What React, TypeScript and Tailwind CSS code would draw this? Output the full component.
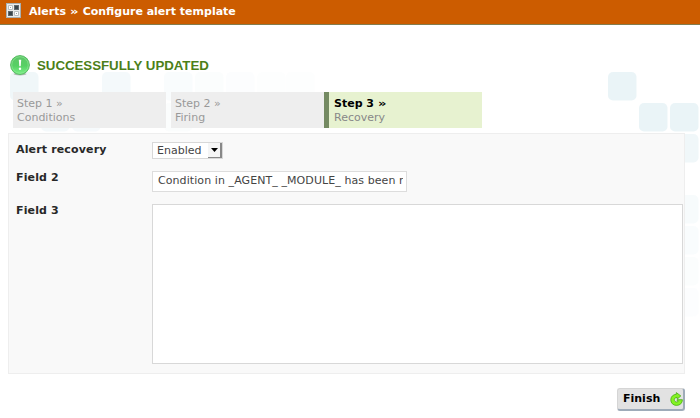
const tiles = [
  { x: 10, y: 72, o: 0.7 }, { x: 102, y: 72, o: 0.5 }, { x: 164, y: 72, o: 0.25 },
  { x: 195, y: 72, o: 0.2 }, { x: 226, y: 72, o: 0.15 }, { x: 257, y: 72, o: 0.1 }, { x: 286, y: 72, o: 0.07 },
  { x: 41, y: 103, o: 0.5 }, { x: 72, y: 103, o: 0.4 }, { x: 164, y: 103, o: 0.2 },
  { x: 608, y: 72, o: 0.95 }, { x: 639, y: 103, o: 0.95 }, { x: 670, y: 103, o: 0.95 },
  { x: 670, y: 134, o: 0.7 }, { x: 670, y: 195, o: 0.35 }, { x: 670, y: 226, o: 0.25 },
  { x: 670, y: 257, o: 0.2 }, { x: 670, y: 288, o: 0.15 },
];

function Backdrop() {
  return (
    <svg className="absolute inset-0 -z-10" width="700" height="418" aria-hidden="true">
      {tiles.map((t, i) => (
        <rect key={i} x={t.x} y={t.y} width="28.500" height="28.500" rx="5" fill="#e9f3f7" opacity={t.o} />
      ))}
    </svg>
  );
}

function TemplateIcon() {
  return (
    <svg width="15" height="15" viewBox="0 0 15 15" className="shrink-0">
      <rect x=".5" y=".5" width="14" height="14" fill="#e9ebeb" stroke="#a9b1b3" />
      <path d="M2.500 2.500h4v4h-4zM8.500 8.500h4v4h-4z" fill="#fff" stroke="#b9bebf" />
      <path d="M8 2h5v5H8zM2 8h5v5H2z" fill="#5f686c" />
      <path d="M9 3h3v3H9zM3 9h3v3H3z" fill="#39444a" />
      <path d="M4 4h1v1H4zM10 10h1v1h-1z" fill="#9aa1a4" />
    </svg>
  );
}

function SuccessIcon() {
  return (
    <svg width="20" height="21" viewBox="0 0 20 21" className="shrink-0">
      <defs>
        <linearGradient id="ok" x1="0" y1="0" x2="0" y2="1">
          <stop offset="0" stopColor="#5fc569" />
          <stop offset=".55" stopColor="#56d064" />
          <stop offset="1" stopColor="#7cf388" />
        </linearGradient>
      </defs>
      <ellipse cx="10" cy="19" rx="6.500" ry="1.500" fill="#8a948b" opacity=".6" />
      <circle cx="10" cy="10" r="9.400" fill="url(#ok)" stroke="#4bb557" strokeWidth=".9" />
      <circle cx="10" cy="10" r="8.300" fill="none" stroke="#8ee696" strokeWidth=".7" />
      <path d="M8.800 4.700h2.400l-.5 6.600H9.300z" fill="#fff" />
      <circle cx="10" cy="13.800" r="1.200" fill="#fff" />
    </svg>
  );
}

function FinishIcon() {
  return (
    <svg width="13" height="14" viewBox="0 0 13 14" className="shrink-0">
      <path
        d="M6.300 2.300V.6l4.500 3.300-3.600 3.300V5.400C5.500 5.300 4.300 6.300 4.300 7.700c0 1.300 1 2.300 2.300 2.300.9 0 1.500-.4 1.900-1.200H7.200V7.700h5.200c0 3.300-2.300 5.700-5.800 5.700C3.200 13.400.8 11 .8 7.900.8 4.800 3 2.400 6.300 2.300z"
        fill="#83f322" stroke="#4aac16" strokeWidth=".8" strokeLinejoin="round"
      />
    </svg>
  );
}

/* Bold headings use a slightly widened guillemet. */
function Arrows() {
  return <span className="inline-block w-[9px] origin-left scale-x-[1.200]">»</span>;
}

function Step({ title, name, active = false, className = "" }: { title: string; name: string; active?: boolean; className?: string }) {
  return (
    <li className={`h-9 pl-[5px] pt-[5px] ${active ? "w-[158px] border-l-[5px] border-[#748a62] bg-[#e7f2d0]" : "w-[153px] bg-[#eee]"} ${className}`}>
      <div className={`h-[14px] leading-[13px] ${active ? "font-bold text-black" : "-ml-px text-[#999]"}`}>
        {title} {active ? <Arrows /> : "»"}
      </div>
      <div className={`leading-[13px] ${active ? "text-[#888]" : "-ml-px text-[#999]"}`}>{name}</div>
    </li>
  );
}

const label = "w-[136px] shrink-0 font-bold leading-[14px] tracking-[0.150px] text-[#282828]";

export default function App() {
  return (
    <div className="relative isolate h-[418px] w-[700px] overflow-hidden bg-white font-['DejaVu_Sans',sans-serif] text-[11px]">
      <Backdrop />
      <header className="flex h-[25px] items-start border-b border-[#847c4c] bg-[#cc5c00] pl-1.5 pt-[3px]">
        <TemplateIcon />
        <h1 className="ml-2 mt-[2px] whitespace-nowrap font-bold leading-[14px] text-white">
          Alerts <Arrows /> Configure alert template
        </h1>
      </header>
      <div className="mt-[30px] flex h-[21px] pl-2.5">
        <SuccessIcon />
        <h2 className="ml-[7px] mt-[3px] whitespace-nowrap font-['Liberation_Sans',sans-serif] text-[13.300px] font-bold leading-4 tracking-[-0.040px] text-[#4c7f19]">SUCCESSFULLY UPDATED</h2>
      </div>
      <ol className="mt-4 flex pl-[13px]">
        <Step title="Step 1" name="Conditions" />
        <Step title="Step 2" name="Firing" className="ml-[5px]" />
        <Step title="Step 3" name="Recovery" active />
      </ol>
      <main className="ml-2 mt-[5px] h-[241px] w-[677px] border border-[#eee] bg-[#f9f9f9] pl-[7px]">
        <div className="flex h-[37px] pt-2">
          <div className={`${label} pt-px`}>Alert recovery</div>
          <div className="flex h-[17px] w-[71px] justify-between border border-[#d8d8d8] bg-white pl-1 leading-[15px] text-[#444]">
            <span>Enabled</span>
            <span className="flex h-[15px] w-[14px] items-center justify-center border-b border-r-2 border-[#888] bg-[#f5f5f5]">
              <svg width="7" height="4"><path d="M0 0h7L3.500 4z" fill="#000" /></svg>
            </span>
          </div>
        </div>
        <div className="flex h-[33px]">
          <div className={label}>Field 2</div>
          <div className="h-[21px] w-[255px] border border-[#ddd] bg-white pl-[5px] pr-[3px] leading-[18px] text-[#444]">
            <div className="overflow-hidden whitespace-nowrap tracking-[0.080px]">Condition in _AGENT_ _MODULE_ has been restored</div>
          </div>
        </div>
        <div className="flex">
          <div className={label}>Field 3</div>
          <div className="h-[160px] w-[531px] border border-[#d8d8d8] bg-white" />
        </div>
      </main>
      <div className="mt-3.5 flex justify-end pr-[15px]">
        <button className="flex h-[23px] w-[68px] items-center justify-between rounded-[3px] border border-b-2 border-r-2 border-[#d5d5d5] border-b-[#9eabb9] border-r-[#9eabb9] bg-[#e2e2e2] pl-[5px] pr-0 font-bold text-black">
          <span>Finish</span>
          <FinishIcon />
        </button>
      </div>
    </div>
  );
}
